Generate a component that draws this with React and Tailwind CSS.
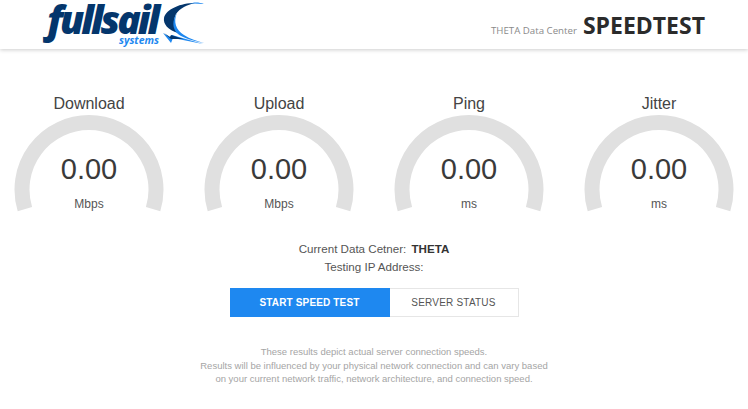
const gauges = [
  { label: "Download", unit: "Mbps" },
  { label: "Upload", unit: "Mbps" },
  { label: "Ping", unit: "ms" },
  { label: "Jitter", unit: "ms" },
];

function Sail() {
  return (
    <svg width="43" height="44" viewBox="0 0 43 44" className="shrink-0">
      {/* dark main sail */}
      <path d="M32 1 C18 1 3 7 1 16 C0 22 5 28 15 31 C11 26 10 18 13 12 C17 6 24 3 32 1 Z" fill="#04366c" />
      {/* light blue sweeps */}
      <path d="M41 2 C36 0 30 0 26 2 C31 1 36 2 41 2 Z" fill="#1e88f0" />
      <path d="M14 11 C10 20 13 28 21 33 C27 37 34 39 41 41 C30 39 20 36 15 32 C9 27 9 18 14 11 Z" fill="#1e88f0" />
      <path d="M0 31 L8 41 L10 36 L40 42 L9 33 L7 35 Z" fill="#1e88f0" />
      <path d="M1 31 L8 37 L20 37 L8 33 L7 35 Z" fill="#04366c" />
    </svg>
  );
}

function Gauge({ label, unit }) {
  return (
    <div className="w-[150px] flex flex-col items-center">
      <div className="text-[16px] leading-[18px] text-[#444]">{label}</div>
      <div className="relative w-[150px] h-[104px] mt-[2px]">
        <svg width="150" height="104" viewBox="0 0 150 104" className="block">
          <path
            d="M 10.9 94.1 A 67 67 0 1 1 139.1 94.1"
            fill="none"
            stroke="#e0e0e0"
            strokeWidth="15"
          />
        </svg>
        <div className="absolute inset-x-0 top-[36px] text-center text-[29px] leading-[36px] text-[#3a3a3a]">
          0.00
        </div>
        <div className="absolute inset-x-0 top-[81px] text-center text-[12px] leading-[16px] text-[#555]">
          {unit}
        </div>
      </div>
    </div>
  );
}

export default function App() {
  return (
    <div className="w-[748px] h-[409px] bg-white overflow-hidden font-['Liberation_Sans',sans-serif]">
      {/* Header */}
      <header className="h-[49px] flex items-start justify-between bg-white shadow-[0_1px_4px_rgba(0,0,0,0.2)] pl-[47px] pr-[43px]">
        <div className="flex items-start pt-[2px]">
          <div className="w-[116px] h-[44px] flex flex-col">
            <div className="h-[33px] font-['Open_Sans',sans-serif] font-extrabold italic text-[39px] leading-[33px] tracking-[-3px] text-[#04366c] whitespace-nowrap">
              fullsail
            </div>
            <div className="self-end mr-[4px] font-['Open_Sans',sans-serif] font-bold italic text-[10.5px] leading-[10px] text-[#1e88f0]">
              systems
            </div>
          </div>
          <Sail />
        </div>
        <div className="flex items-baseline gap-[6px] pt-[11px] font-['Open_Sans',sans-serif]">
          <span className="text-[9.7px] text-[#8a8a8a]">THETA Data Center</span>
          <span className="text-[23px] leading-[28px] font-bold text-[#2b2b2b]">SPEEDTEST</span>
        </div>
      </header>

      {/* Gauges */}
      <div className="flex gap-[40px] pl-[14px] pt-[46px]">
        {gauges.map((g) => (
          <Gauge key={g.label} label={g.label} unit={g.unit} />
        ))}
      </div>

      {/* Info */}
      <div className="mt-[21px] flex flex-col items-center text-[11.6px] leading-[18px] text-[#555]">
        <div>
          Current Data Cetner: <span className="ml-[2px] font-bold text-[#333]">THETA</span>
        </div>
        <div>Testing IP Address:</div>
      </div>

      {/* Buttons */}
      <div className="mt-[12px] flex justify-center">
        <button className="w-[160px] h-[29px] bg-[#1e88f0] text-white text-[10px] font-bold tracking-[0.15px]">
          START SPEED TEST
        </button>
        <button className="w-[129px] h-[29px] bg-white border border-[#e6e6e6] border-l-0 text-[#555] text-[10px] tracking-[0.2px]">
          SERVER STATUS
        </button>
      </div>

      {/* Disclaimer */}
      <div className="mt-[28px] text-center text-[9.5px] leading-[13.5px] text-[#a5a5a5]">
        <div>These results depict actual server connection speeds.</div>
        <div>Results will be influenced by your physical network connection and can vary based</div>
        <div>on your current network traffic, network architecture, and connection speed.</div>
      </div>
    </div>
  );
}
